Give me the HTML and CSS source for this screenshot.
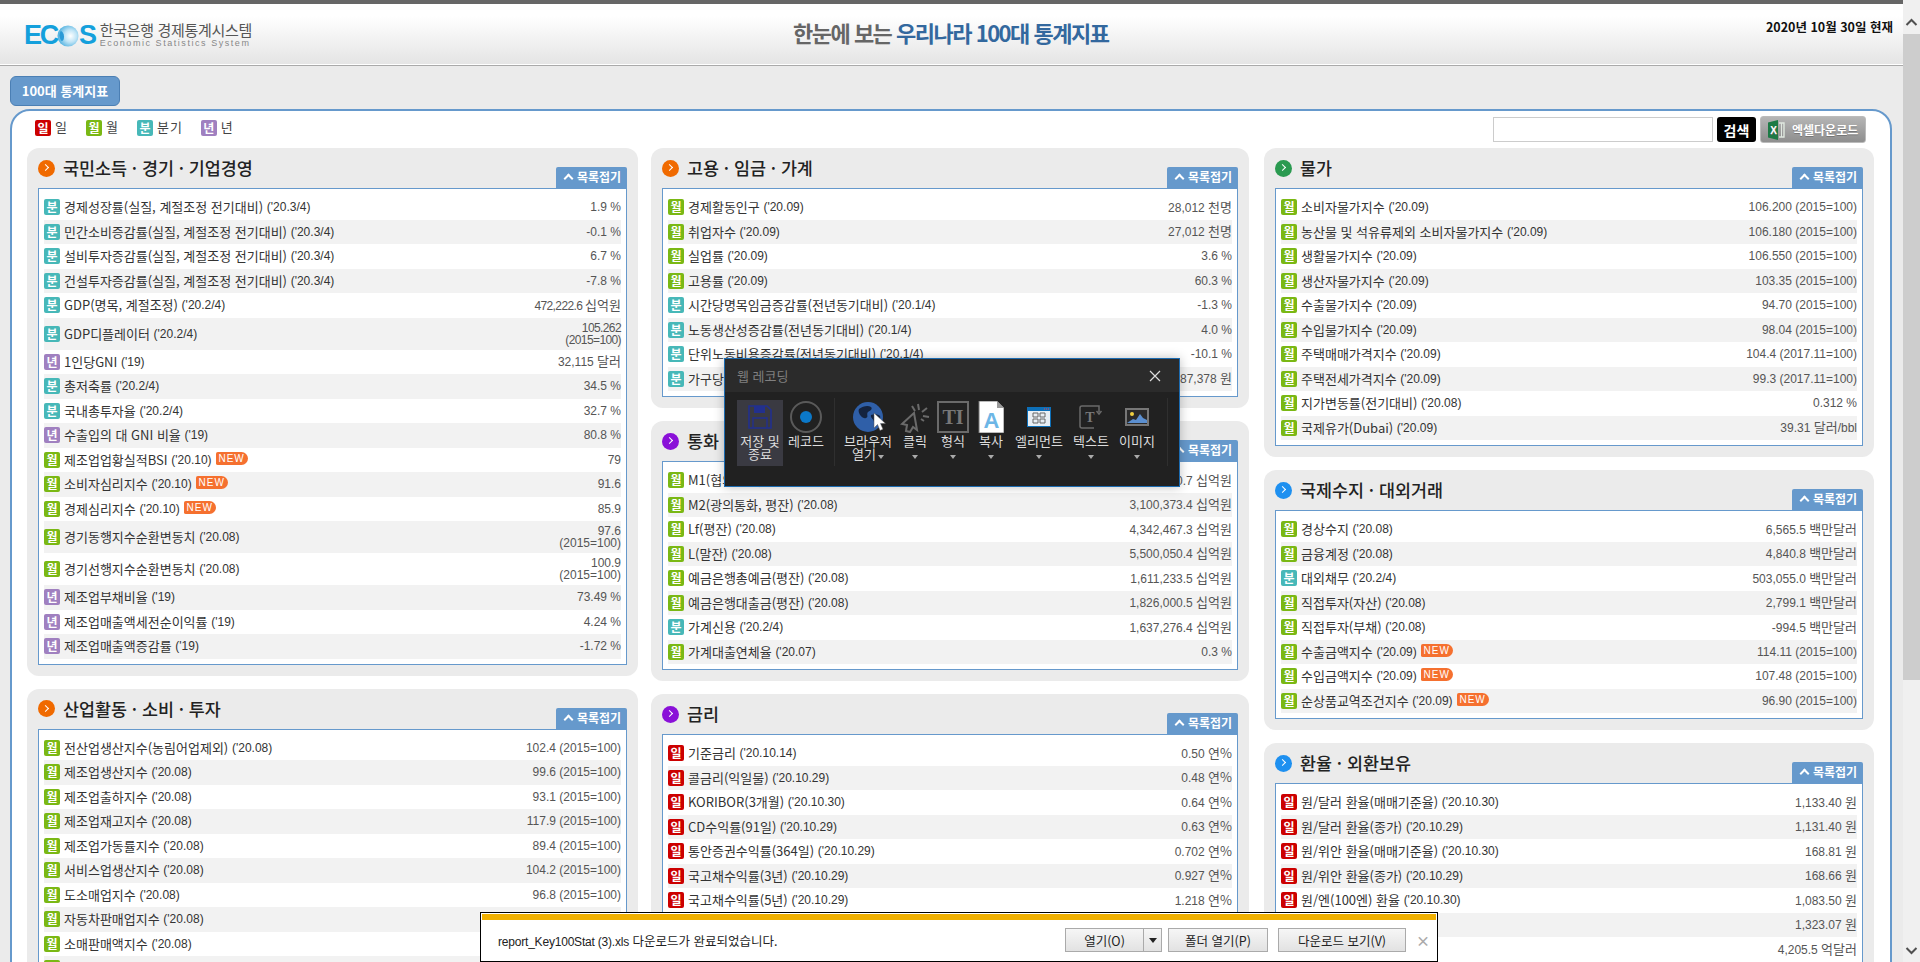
FILE: index.html
```html
<!DOCTYPE html>
<html lang="ko">

<head>
  <meta charset="UTF-8" />
  <title>한눈에 보는 우리나라 100대 통계지표</title>
  <link rel="stylesheet" href="styles.css">
</head>

<body>
  <div class="page">
    <!-- 상단 헤더 -->
    <header class="top">
      <div class="logo">
        <div class="logo-mark">EC<svg class="logo-globe" width="22" height="22" viewBox="0 0 23 23"><defs><radialGradient id="lg" cx="0.62" cy="0.5" r="0.65"><stop offset="0" stop-color="#ffffff"/><stop offset="0.45" stop-color="#bfe4f6"/><stop offset="1" stop-color="#3fa9dc"/></radialGradient></defs><circle cx="11.5" cy="11.5" r="11" fill="url(#lg)"/><path d="M4 6c3 2 4 5 3 9-1 2-2 2-3 1C2 12 2 9 4 6z" fill="#2a9ad6"/></svg>S</div>
        <div class="logo-text">
          <div class="logo-ko">한국은행 경제통계시스템</div>
          <div class="logo-en">Economic Statistics System</div>
        </div>
      </div>
      <h1 class="title">한눈에 보는 <span>우리나라 100대 통계지표</span></h1>
      <div class="today">2020년 10월 30일 현재</div>
    </header>

    <a class="tab">100대 통계지표</a>

    <main class="box">
      <div class="legend-row">
        <div class="legend">
          <span class="legend-item"><i class="bg d">일</i>일</span>
          <span class="legend-item"><i class="bg m">월</i>월</span>
          <span class="legend-item"><i class="bg q">분</i>분기</span>
          <span class="legend-item"><i class="bg y">년</i>년</span>
        </div>
        <div class="search">
          <input class="search-input" />
          <button class="search-btn">검색</button>
          <button class="excel-btn">
            <svg width="17" height="20" viewBox="0 0 17 20"><path d="M0 2.5 10 0v20L0 17.5z" fill="#1d7a45"/><path d="M11 3h5v14h-5" fill="none" stroke="#dfe8df" stroke-width="1.4"/><path d="M13.500 3v14" stroke="#dfe8df"/><text x="2.300" y="13.500" class="excel-x">X</text></svg>
            엑셀다운로드
          </button>
        </div>
      </div>

      <div class="columns">
        <div class="col col1">
          <section class="panel">
            <div class="panel-head">
              <h2 class="panel-title"><i class="dot orange"></i>국민소득 · 경기 · 기업경영</h2>
              <a class="fold">목록접기</a>
            </div>
            <ul class="list">
              <li class="row"><span class="name"><i class="bg q">분</i>경제성장률(실질, 계절조정 전기대비) <em>('20.3/4)</em></span><span class="val">1.9 %</span></li>
              <li class="row"><span class="name"><i class="bg q">분</i>민간소비증감률(실질, 계절조정 전기대비) <em>('20.3/4)</em></span><span class="val">-0.1 %</span></li>
              <li class="row"><span class="name"><i class="bg q">분</i>설비투자증감률(실질, 계절조정 전기대비) <em>('20.3/4)</em></span><span class="val">6.7 %</span></li>
              <li class="row"><span class="name"><i class="bg q">분</i>건설투자증감률(실질, 계절조정 전기대비) <em>('20.3/4)</em></span><span class="val">-7.8 %</span></li>
              <li class="row"><span class="name"><i class="bg q">분</i>GDP(명목, 계절조정) <em>('20.2/4)</em></span><span class="val tight">472,222.6 <u>십억원</u></span></li>
              <li class="row tall"><span class="name"><i class="bg q">분</i>GDP디플레이터 <em>('20.2/4)</em></span><span class="val tight">105.262<br>(2015=100)</span></li>
              <li class="row"><span class="name"><i class="bg y">년</i>1인당GNI <em>('19)</em></span><span class="val">32,115 <u>달러</u></span></li>
              <li class="row"><span class="name"><i class="bg q">분</i>총저축률 <em>('20.2/4)</em></span><span class="val">34.5 %</span></li>
              <li class="row"><span class="name"><i class="bg q">분</i>국내총투자율 <em>('20.2/4)</em></span><span class="val">32.7 %</span></li>
              <li class="row"><span class="name"><i class="bg y">년</i>수출입의 대 GNI 비율 <em>('19)</em></span><span class="val">80.8 %</span></li>
              <li class="row"><span class="name"><i class="bg m">월</i>제조업업황실적BSI <em>('20.10)</em><b class="new">NEW</b></span><span class="val">79</span></li>
              <li class="row"><span class="name"><i class="bg m">월</i>소비자심리지수 <em>('20.10)</em><b class="new">NEW</b></span><span class="val">91.6</span></li>
              <li class="row"><span class="name"><i class="bg m">월</i>경제심리지수 <em>('20.10)</em><b class="new">NEW</b></span><span class="val">85.9</span></li>
              <li class="row tall"><span class="name"><i class="bg m">월</i>경기동행지수순환변동치 <em>('20.08)</em></span><span class="val">97.6<br>(2015=100)</span></li>
              <li class="row tall"><span class="name"><i class="bg m">월</i>경기선행지수순환변동치 <em>('20.08)</em></span><span class="val">100.9<br>(2015=100)</span></li>
              <li class="row"><span class="name"><i class="bg y">년</i>제조업부채비율 <em>('19)</em></span><span class="val">73.49 %</span></li>
              <li class="row"><span class="name"><i class="bg y">년</i>제조업매출액세전순이익률 <em>('19)</em></span><span class="val">4.24 %</span></li>
              <li class="row"><span class="name"><i class="bg y">년</i>제조업매출액증감률 <em>('19)</em></span><span class="val">-1.72 %</span></li>
            </ul>
          </section>

          <section class="panel">
            <div class="panel-head">
              <h2 class="panel-title"><i class="dot orange"></i>산업활동 · 소비 · 투자</h2>
              <a class="fold">목록접기</a>
            </div>
            <ul class="list">
              <li class="row"><span class="name"><i class="bg m">월</i>전산업생산지수(농림어업제외) <em>('20.08)</em></span><span class="val">102.4 (2015=100)</span></li>
              <li class="row"><span class="name"><i class="bg m">월</i>제조업생산지수 <em>('20.08)</em></span><span class="val">99.6 (2015=100)</span></li>
              <li class="row"><span class="name"><i class="bg m">월</i>제조업출하지수 <em>('20.08)</em></span><span class="val">93.1 (2015=100)</span></li>
              <li class="row"><span class="name"><i class="bg m">월</i>제조업재고지수 <em>('20.08)</em></span><span class="val">117.9 (2015=100)</span></li>
              <li class="row"><span class="name"><i class="bg m">월</i>제조업가동률지수 <em>('20.08)</em></span><span class="val">89.4 (2015=100)</span></li>
              <li class="row"><span class="name"><i class="bg m">월</i>서비스업생산지수 <em>('20.08)</em></span><span class="val">104.2 (2015=100)</span></li>
              <li class="row"><span class="name"><i class="bg m">월</i>도소매업지수 <em>('20.08)</em></span><span class="val">96.8 (2015=100)</span></li>
              <li class="row"><span class="name"><i class="bg m">월</i>자동차판매업지수 <em>('20.08)</em></span></li>
              <li class="row"><span class="name"><i class="bg m">월</i>소매판매액지수 <em>('20.08)</em></span></li>
              <li class="row"><span class="name"><i class="bg m">월</i></span></li>
            </ul>
          </section>
        </div>

        <div class="col col2">
          <section class="panel">
            <div class="panel-head">
              <h2 class="panel-title"><i class="dot orange"></i>고용 · 임금 · 가계</h2>
              <a class="fold">목록접기</a>
            </div>
            <ul class="list">
              <li class="row"><span class="name"><i class="bg m">월</i>경제활동인구 <em>('20.09)</em></span><span class="val">28,012 <u>천명</u></span></li>
              <li class="row"><span class="name"><i class="bg m">월</i>취업자수 <em>('20.09)</em></span><span class="val">27,012 <u>천명</u></span></li>
              <li class="row"><span class="name"><i class="bg m">월</i>실업률 <em>('20.09)</em></span><span class="val">3.6 %</span></li>
              <li class="row"><span class="name"><i class="bg m">월</i>고용률 <em>('20.09)</em></span><span class="val">60.3 %</span></li>
              <li class="row"><span class="name"><i class="bg q">분</i>시간당명목임금증감률(전년동기대비) <em>('20.1/4)</em></span><span class="val">-1.3 %</span></li>
              <li class="row"><span class="name"><i class="bg q">분</i>노동생산성증감률(전년동기대비) <em>('20.1/4)</em></span><span class="val">4.0 %</span></li>
              <li class="row"><span class="name"><i class="bg q">분</i>단위노동비용증감률(전년동기대비) <em>('20.1/4)</em></span><span class="val">-10.1 %</span></li>
              <li class="row"><span class="name"><i class="bg q">분</i>가구당월평균소득 <em>('20.2/4)</em></span><span class="val">5,387,378 <u>원</u></span></li>
            </ul>
          </section>

          <section class="panel">
            <div class="panel-head">
              <h2 class="panel-title"><i class="dot purple"></i>통화 · 유동성</h2>
              <a class="fold">목록접기</a>
            </div>
            <ul class="list">
              <li class="row"><span class="name"><i class="bg m">월</i>M1(협의통화, 평잔) <em>('20.08)</em></span><span class="val">1,098,000.7 <u>십억원</u></span></li>
              <li class="row"><span class="name"><i class="bg m">월</i>M2(광의통화, 평잔) <em>('20.08)</em></span><span class="val">3,100,373.4 <u>십억원</u></span></li>
              <li class="row"><span class="name"><i class="bg m">월</i>Lf(평잔) <em>('20.08)</em></span><span class="val">4,342,467.3 <u>십억원</u></span></li>
              <li class="row"><span class="name"><i class="bg m">월</i>L(말잔) <em>('20.08)</em></span><span class="val">5,500,050.4 <u>십억원</u></span></li>
              <li class="row"><span class="name"><i class="bg m">월</i>예금은행총예금(평잔) <em>('20.08)</em></span><span class="val">1,611,233.5 <u>십억원</u></span></li>
              <li class="row"><span class="name"><i class="bg m">월</i>예금은행대출금(평잔) <em>('20.08)</em></span><span class="val">1,826,000.5 <u>십억원</u></span></li>
              <li class="row"><span class="name"><i class="bg q">분</i>가계신용 <em>('20.2/4)</em></span><span class="val">1,637,276.4 <u>십억원</u></span></li>
              <li class="row"><span class="name"><i class="bg m">월</i>가계대출연체율 <em>('20.07)</em></span><span class="val">0.3 %</span></li>
            </ul>
          </section>

          <section class="panel">
            <div class="panel-head">
              <h2 class="panel-title"><i class="dot purple"></i>금리</h2>
              <a class="fold">목록접기</a>
            </div>
            <ul class="list">
              <li class="row"><span class="name"><i class="bg d">일</i>기준금리 <em>('20.10.14)</em></span><span class="val">0.50 <u>연%</u></span></li>
              <li class="row"><span class="name"><i class="bg d">일</i>콜금리(익일물) <em>('20.10.29)</em></span><span class="val">0.48 <u>연%</u></span></li>
              <li class="row"><span class="name"><i class="bg d">일</i>KORIBOR(3개월) <em>('20.10.30)</em></span><span class="val">0.64 <u>연%</u></span></li>
              <li class="row"><span class="name"><i class="bg d">일</i>CD수익률(91일) <em>('20.10.29)</em></span><span class="val">0.63 <u>연%</u></span></li>
              <li class="row"><span class="name"><i class="bg d">일</i>통안증권수익률(364일) <em>('20.10.29)</em></span><span class="val">0.702 <u>연%</u></span></li>
              <li class="row"><span class="name"><i class="bg d">일</i>국고채수익률(3년) <em>('20.10.29)</em></span><span class="val">0.927 <u>연%</u></span></li>
              <li class="row"><span class="name"><i class="bg d">일</i>국고채수익률(5년) <em>('20.10.29)</em></span><span class="val">1.218 <u>연%</u></span></li>
            </ul>
          </section>
        </div>

        <div class="col col3">
          <section class="panel">
            <div class="panel-head">
              <h2 class="panel-title"><i class="dot green"></i>물가</h2>
              <a class="fold">목록접기</a>
            </div>
            <ul class="list">
              <li class="row"><span class="name"><i class="bg m">월</i>소비자물가지수 <em>('20.09)</em></span><span class="val">106.200 (2015=100)</span></li>
              <li class="row"><span class="name"><i class="bg m">월</i>농산물 및 석유류제외 소비자물가지수 <em>('20.09)</em></span><span class="val">106.180 (2015=100)</span></li>
              <li class="row"><span class="name"><i class="bg m">월</i>생활물가지수 <em>('20.09)</em></span><span class="val">106.550 (2015=100)</span></li>
              <li class="row"><span class="name"><i class="bg m">월</i>생산자물가지수 <em>('20.09)</em></span><span class="val">103.35 (2015=100)</span></li>
              <li class="row"><span class="name"><i class="bg m">월</i>수출물가지수 <em>('20.09)</em></span><span class="val">94.70 (2015=100)</span></li>
              <li class="row"><span class="name"><i class="bg m">월</i>수입물가지수 <em>('20.09)</em></span><span class="val">98.04 (2015=100)</span></li>
              <li class="row"><span class="name"><i class="bg m">월</i>주택매매가격지수 <em>('20.09)</em></span><span class="val">104.4 (2017.11=100)</span></li>
              <li class="row"><span class="name"><i class="bg m">월</i>주택전세가격지수 <em>('20.09)</em></span><span class="val">99.3 (2017.11=100)</span></li>
              <li class="row"><span class="name"><i class="bg m">월</i>지가변동률(전기대비) <em>('20.08)</em></span><span class="val">0.312 %</span></li>
              <li class="row"><span class="name"><i class="bg m">월</i>국제유가(Dubai) <em>('20.09)</em></span><span class="val">39.31 <u>달러</u>/bbl</span></li>
            </ul>
          </section>

          <section class="panel">
            <div class="panel-head">
              <h2 class="panel-title"><i class="dot blue"></i>국제수지 · 대외거래</h2>
              <a class="fold">목록접기</a>
            </div>
            <ul class="list">
              <li class="row"><span class="name"><i class="bg m">월</i>경상수지 <em>('20.08)</em></span><span class="val">6,565.5 <u>백만달러</u></span></li>
              <li class="row"><span class="name"><i class="bg m">월</i>금융계정 <em>('20.08)</em></span><span class="val">4,840.8 <u>백만달러</u></span></li>
              <li class="row"><span class="name"><i class="bg q">분</i>대외채무 <em>('20.2/4)</em></span><span class="val">503,055.0 <u>백만달러</u></span></li>
              <li class="row"><span class="name"><i class="bg m">월</i>직접투자(자산) <em>('20.08)</em></span><span class="val">2,799.1 <u>백만달러</u></span></li>
              <li class="row"><span class="name"><i class="bg m">월</i>직접투자(부채) <em>('20.08)</em></span><span class="val">-994.5 <u>백만달러</u></span></li>
              <li class="row"><span class="name"><i class="bg m">월</i>수출금액지수 <em>('20.09)</em><b class="new">NEW</b></span><span class="val">114.11 (2015=100)</span></li>
              <li class="row"><span class="name"><i class="bg m">월</i>수입금액지수 <em>('20.09)</em><b class="new">NEW</b></span><span class="val">107.48 (2015=100)</span></li>
              <li class="row"><span class="name"><i class="bg m">월</i>순상품교역조건지수 <em>('20.09)</em><b class="new">NEW</b></span><span class="val">96.90 (2015=100)</span></li>
            </ul>
          </section>

          <section class="panel">
            <div class="panel-head">
              <h2 class="panel-title"><i class="dot blue"></i>환율 · 외환보유</h2>
              <a class="fold">목록접기</a>
            </div>
            <ul class="list">
              <li class="row"><span class="name"><i class="bg d">일</i>원/달러 환율(매매기준율) <em>('20.10.30)</em></span><span class="val">1,133.40 <u>원</u></span></li>
              <li class="row"><span class="name"><i class="bg d">일</i>원/달러 환율(종가) <em>('20.10.29)</em></span><span class="val">1,131.40 <u>원</u></span></li>
              <li class="row"><span class="name"><i class="bg d">일</i>원/위안 환율(매매기준율) <em>('20.10.30)</em></span><span class="val">168.81 <u>원</u></span></li>
              <li class="row"><span class="name"><i class="bg d">일</i>원/위안 환율(종가) <em>('20.10.29)</em></span><span class="val">168.66 <u>원</u></span></li>
              <li class="row"><span class="name"><i class="bg d">일</i>원/엔(100엔) 환율 <em>('20.10.30)</em></span><span class="val">1,083.50 <u>원</u></span></li>
              <li class="row"><span class="name"><i class="bg d">일</i>원/유로 환율 <em>('20.10.30)</em></span><span class="val">1,323.07 <u>원</u></span></li>
              <li class="row"><span class="name"><i class="bg m">월</i>외환보유액 <em>('20.09)</em></span><span class="val">4,205.5 <u>억달러</u></span></li>
            </ul>
          </section>
        </div>
      </div>
    </main>
  </div>

  <!-- 브라우저 스크롤바 -->
  <div class="scrollbar">
    <div class="sb-end"><svg width="17" height="34" viewBox="0 0 17 34"><path d="M3.500 25 8.500 20 13.500 25" fill="none" stroke="#505050" stroke-width="2"/></svg></div>
    <div class="sb-thumb"></div>
    <div class="sb-track"><svg width="17" height="20" viewBox="0 0 17 20"><path d="M3.500 6 8.500 11 13.500 6" fill="none" stroke="#505050" stroke-width="2"/></svg></div>
  </div>

  <!-- 웹 레코딩 창 -->
  <div class="rec">
    <div class="rec-head"><span>웹 레코딩</span>
      <svg width="12" height="12" viewBox="0 0 12 12"><path d="M1 1 11 11M11 1 1 11" stroke="#ddd" stroke-width="1.200"/></svg>
    </div>
    <div class="rec-body">
      <div class="tool w46 on">
        <div class="tool-ico"><svg width="24" height="24" viewBox="0 0 24 24"><path d="M1 1h18l4 4v18H1z" fill="none" stroke="#22308e" stroke-width="1.600"/><path d="M6 1v7h11V1" fill="#22308e"/><path d="M5 23V13h14v10" fill="none" stroke="#22308e" stroke-width="1.400"/></svg></div>
        <div class="tool-label">저장 및<br>종료</div>
      </div>
      <div class="tool w46">
        <div class="tool-ico"><svg width="32" height="32" viewBox="0 0 32 32"><circle cx="16" cy="16" r="15" fill="none" stroke="#5a5a5a" stroke-width="2"/><circle cx="16" cy="16" r="6" fill="#0b78c8"/></svg></div>
        <div class="tool-label">레코드</div>
      </div>
      <div class="rec-sep"></div>
      <div class="tool w56">
        <div class="tool-ico"><svg width="42" height="32" viewBox="-6 0 42 32"><circle cx="15" cy="16" r="15" fill="#2f5fa8"/><path d="M6 8c4-3 9-4 12-2 2 2-1 4-3 5-2 2 1 5-2 6-3 1-5-2-6-3-1-2-2-4-1-6zM18 14c3-1 7-1 9 1 1 3-1 7-3 9-2 1-3-1-3-3 0-3-4-4-3-7z" fill="#14233f"/><path d="M21 12v15l3.500-3.500 2.500 6 3-1.300-2.500-5.700h5z" fill="#fff" stroke="#555" stroke-width="0.500"/></svg></div>
        <div class="tool-label">브라우저<br>열기<i class="dd inline"></i></div>
      </div>
      <div class="tool w38">
        <div class="tool-ico"><svg width="30" height="32" viewBox="0 0 30 32"><path d="M14 12 2 23l5 1-1 6 4 1 3-5 4 3z" fill="none" stroke="#6a6a6a" stroke-width="2"/><path d="M18 3l1 6M27 7l-5 4M29 16l-6-1M12 5l3 5M24 20l-3-2" stroke="#6a6a6a" stroke-width="2"/></svg></div>
        <div class="tool-label">클릭<br><i class="dd"></i></div>
      </div>
      <div class="tool w38">
        <div class="tool-ico"><svg width="32" height="32" viewBox="0 0 32 32"><rect x="1" y="1" width="30" height="30" fill="none" stroke="#6a6a6a" stroke-width="2"/><text x="16" y="23" class="ti">TI</text></svg></div>
        <div class="tool-label">형식<br><i class="dd"></i></div>
      </div>
      <div class="tool w38">
        <div class="tool-ico"><svg width="26" height="32" viewBox="0 0 26 32"><path d="M1 0h18l7 7v25H1z" fill="#fff" stroke="#777"/><path d="M19 0v7h7z" fill="#999"/><text x="13.500" y="27" class="ta">A</text></svg></div>
        <div class="tool-label">복사<br><i class="dd"></i></div>
      </div>
      <div class="tool w58">
        <div class="tool-ico"><svg width="24" height="20" viewBox="0 0 24 20"><rect width="24" height="20" fill="#0d6fb8"/><rect x="1" y="4" width="22" height="15" fill="#e8eef4"/><path d="M6 6h5v4H6zM13 6h5v4h-5zM6 12h5v4H6zM13 12h5v4h-5z" fill="none" stroke="#666"/><path d="M17 2h1M19 2h1M21 2h1" stroke="#e44"/></svg></div>
        <div class="tool-label">엘리먼트<br><i class="dd"></i></div>
      </div>
      <div class="tool w46">
        <div class="tool-ico"><svg width="24" height="24" viewBox="0 0 24 24"><path d="M15 1H3a2 2 0 0 0-2 2v18a2 2 0 0 0 2 2h12" fill="none" stroke="#6a6a6a" stroke-width="1.500"/><path d="M15 1h5v6M17.500 6l2.500 3 2.500-3" fill="none" stroke="#6a6a6a" stroke-width="1.500"/><text x="11" y="17" class="tt">T</text></svg></div>
        <div class="tool-label">텍스트<br><i class="dd"></i></div>
      </div>
      <div class="tool w46">
        <div class="tool-ico"><svg width="24" height="18" viewBox="0 0 24 18"><rect x="1" y="1" width="22" height="16" fill="#2a2a2a" stroke="#777" stroke-width="2"/><circle cx="7" cy="6" r="2" fill="#f0d040"/><path d="M2 15l6-4 3 1 4-6 3 4 4 2v3z" fill="#5b8fd0"/></svg></div>
        <div class="tool-label">이미지<br><i class="dd"></i></div>
      </div>
      <div class="rec-sep end"></div>
    </div>
  </div>

  <!-- 다운로드 알림 -->
  <div class="dl">
    <div class="dl-strip"></div>
    <div class="dl-body">
      <span class="dl-msg"><em>report_Key100Stat (3).xls</em> 다운로드가 완료되었습니다.</span>
      <button class="dl-btn open">열기(O)</button><button class="dl-btn more"></button>
      <button class="dl-btn folder">폴더 열기(P)</button>
      <button class="dl-btn view">다운로드 보기(V)</button>
      <span class="dl-x">×</span>
    </div>
  </div>
</body>

</html>
```

FILE: styles.css
```css
body {
  margin: 0;
  height: 962px;
  overflow: hidden;
  display: flex;
  background: #ebebeb;
  font-family: "Noto Sans CJK KR", sans-serif;
  font-size: 13px;
  color: #222;
}

.page {
  width: 1903px;
  height: 962px;
  overflow: hidden;
  border-top: 4px solid #666;
  box-sizing: border-box;
}

/* header */
.top {
  height: 61px;
  background: linear-gradient(#fff 20%, #e4e4e4);
  border-bottom: 1px solid #aaa;
  box-shadow: inset 0 -1px 0 #fff;
  display: flex;
}

.logo {
  width: 245px;
  flex: none;
  display: flex;
  margin: 18px 0 0 24px;
}

.logo-mark {
  display: flex;
  align-items: flex-start;
  font-family: "Liberation Sans", sans-serif;
  font-weight: bold;
  font-size: 27px;
  line-height: 27px;
  letter-spacing: -2.300px;
  color: #14a0dc;
}

.logo-globe {
  margin-top: 3px;
}

.logo-text {
  margin-left: 5px;
}

.logo-ko {
  margin-top: -1px;
  font-size: 15px;
  line-height: 18px;
  letter-spacing: -0.300px;
  color: #555;
  white-space: nowrap;
}

.logo-en {
  font-family: "Liberation Sans", sans-serif;
  font-size: 9px;
  line-height: 9px;
  letter-spacing: 1.550px;
  color: #888;
  white-space: nowrap;
}

.title {
  margin: 13px 0 0 524px;
  font-size: 22px;
  line-height: 30px;
  font-weight: bold;
  letter-spacing: -1.500px;
  color: #666;
  white-space: nowrap;
}

.title span {
  color: #33689e;
}

.today {
  margin: 14px 10px 0 auto;
  font-size: 12.500px;
  line-height: 18px;
  font-weight: bold;
  color: #111;
}

/* tab */
.tab {
  display: block;
  width: 110px;
  height: 30px;
  box-sizing: border-box;
  margin: 10px 0 0 10px;
  background: #6699cc;
  border: 1px solid #4b7fb4;
  border-radius: 6px;
  color: #fff;
  font-size: 13px;
  font-weight: bold;
  line-height: 28px;
  text-align: center;
}

/* main box */
.box {
  width: 1882px;
  height: 900px;
  box-sizing: border-box;
  margin: 3px 0 0 10px;
  background: #fff;
  border: 2px solid #6699cc;
  border-radius: 20px 20px 0 0;
  padding: 0 16px 0 15px;
}

.legend-row {
  height: 37px;
  display: flex;
  justify-content: space-between;
}

.legend {
  display: flex;
  gap: 18px;
  margin: 9px 0 0 8px;
}

.legend-item {
  display: flex;
  gap: 4px;
  line-height: 14px;
  letter-spacing: 1px;
  color: #444;
}

.bg {
  flex: none;
  display: inline-block;
  width: 16px;
  height: 16px;
  border-radius: 2px;
  color: #fff;
  font-style: normal;
  font-weight: bold;
  font-size: 12px;
  line-height: 15px;
  letter-spacing: 0;
  text-align: center;
}

.bg.d { background: #cc0000; }
.bg.m { background: #7ab814; }
.bg.q { background: #47b8b8; }
.bg.y { background: #a080c0; }

.search {
  display: flex;
  align-items: flex-start;
  gap: 4px;
  margin: 5px 8px 0 0;
}

.search-input {
  width: 220px;
  height: 25px;
  margin: 1px 0 0;
  padding: 0;
  box-sizing: border-box;
  border: 1px solid #ccc;
}

.search-btn {
  width: 39px;
  height: 25px;
  margin-top: 1px;
  padding: 0;
  border: none;
  border-radius: 3px;
  background: #000;
  color: #fff;
  font-family: inherit;
  font-size: 14px;
  font-weight: bold;
}

.excel-btn {
  width: 106px;
  height: 27px;
  padding: 0 0 0 7px;
  display: flex;
  align-items: center;
  gap: 7px;
  border: 1px solid #bbb;
  border-radius: 3px;
  background: linear-gradient(#b5b5b5, #8e8e8e);
  color: #fff;
  font-family: inherit;
  font-size: 12px;
  font-weight: bold;
  white-space: nowrap;
  text-shadow: 0 1px 0 #777;
}

.excel-x {
  font: bold 10px "Liberation Sans", sans-serif;
  fill: #fff;
}

/* columns */
.columns {
  display: flex;
  align-items: flex-start;
  gap: 13px;
}

.col1 { width: 611px; flex: none; }
.col2 { width: 598px; flex: none; margin-right: 2px; }
.col3 { width: 610px; flex: none; }

.panel {
  background: #ebebeb;
  border-radius: 12px;
  padding: 0 11px 11px;
  margin-bottom: 13px;
}

.panel-head {
  height: 40px;
  display: flex;
  justify-content: space-between;
  align-items: flex-end;
}

.panel-title {
  align-self: flex-start;
  display: flex;
  align-items: center;
  gap: 8px;
  margin: 8px 0 0;
  font-size: 17.400px;
  line-height: 24px;
  font-weight: 500;
  color: #222;
}

.dot {
  width: 17px;
  height: 17px;
  border-radius: 50%;
  margin-top: 0;
  position: relative;
}

.dot::after {
  content: "";
  position: absolute;
  left: 4.500px;
  top: 5.500px;
  width: 4px;
  height: 4px;
  border-top: 1.500px solid #fff;
  border-right: 1.500px solid #fff;
  transform: rotate(45deg);
}

.dot.orange { background: #f06a00; }
.dot.purple { background: #8a10d8; }
.dot.green { background: #2a9a50; }
.dot.blue { background: #1e90f0; }

.fold {
  width: 71px;
  height: 21px;
  box-sizing: border-box;
  background: #6699cc;
  border-radius: 2px 2px 0 0;
  color: #fff;
  font-size: 12px;
  font-weight: bold;
  line-height: 20px;
  padding-left: 21px;
  position: relative;
}

.fold::before {
  content: "";
  position: absolute;
  left: 9px;
  top: 8px;
  width: 5px;
  height: 5px;
  border-top: 2px solid #fff;
  border-left: 2px solid #fff;
  transform: rotate(45deg);
}

.list {
  list-style: none;
  margin: 0;
  padding: 6px 5px 5px;
  background: #fff;
  border: 1px solid #6699cc;
}

.row {
  height: 24.500px;
  display: flex;
  justify-content: space-between;
  align-items: center;
}

.row:nth-child(even) {
  background: #f2f2f2;
}

.row.tall {
  height: 32px;
}

.name {
  display: flex;
  align-items: center;
  white-space: pre;
  line-height: 16px;
  color: #333;
}

.name .bg {
  margin-right: 4px;
}

.name em {
  font-family: "Liberation Sans", sans-serif;
  font-size: 12px;
  font-style: normal;
  color: #333;
}

.new {
  width: 32px;
  height: 13px;
  margin: -3px 0 0 4px;
  border-radius: 2px 7px 7px 2px;
  background: #f5702f;
  color: #fff;
  font: normal 10px/13px "Liberation Sans", sans-serif;
  letter-spacing: 1px;
  text-align: center;
}

.val {
  font-family: "Liberation Sans", "Noto Sans CJK KR", sans-serif;
  font-size: 12px;
  line-height: 12px;
  text-align: right;
  color: #555;
  white-space: nowrap;
}

.val.tight {
  letter-spacing: -0.600px;
}

.val.tight u {
  letter-spacing: 0;
}

.val u {
  font-family: "Noto Sans CJK KR", sans-serif;
  font-size: 13px;
  text-decoration: none;
}

/* scrollbar */
.scrollbar {
  width: 17px;
  height: 962px;
  flex: none;
  display: flex;
  flex-direction: column;
  background: #f0f0f0;
}

.sb-end {
  height: 34px;
}

.sb-thumb {
  height: 646px;
  background: #cdcdcd;
}

.sb-track {
  flex: 1;
  display: flex;
  align-items: flex-end;
}

/* recording window */
.rec {
  position: absolute;
  left: 724px;
  top: 358px;
  width: 456px;
  height: 129px;
  box-sizing: border-box;
  background: #212121;
  border: 1px solid #1c6bb0;
  box-shadow: 0 0 10px rgba(0, 0, 0, 0.25);
}

.rec-head {
  height: 33px;
  padding: 0 18px 0 12px;
  background: #2b2b2b;
  color: #808080;
  display: flex;
  justify-content: space-between;
  align-items: center;
}

.rec-body {
  display: flex;
  align-items: flex-start;
  padding: 8px 0 0 12px;
}

.tool {
  height: 66px;
  flex: none;
  text-align: center;
}

.tool.on { background: #3a3a42; }
.w38 { width: 38px; }
.w46 { width: 46px; }
.w56 { width: 56px; }
.w58 { width: 58px; }

.tool-ico {
  height: 34px;
  display: flex;
  justify-content: center;
  align-items: center;
}

.tool-label {
  color: #ddd;
  font-size: 13px;
  line-height: 13px;
  white-space: nowrap;
}

.dd {
  display: inline-block;
  vertical-align: middle;
  margin-top: 3px;
  border: 3.500px solid transparent;
  border-top: 4px solid #aaa;
  border-bottom: none;
}

.dd.inline {
  margin-left: 2px;
}

.rec-sep {
  width: 1px;
  height: 68px;
  margin: -2px 5px 0;
  background: #2f2f2f;
}

.rec-sep.end {
  margin-left: 7px;
}

.ti {
  font: bold 20px "Liberation Serif", serif;
  fill: #777;
  text-anchor: middle;
}

.ta {
  font: bold 22px "Liberation Sans", sans-serif;
  fill: #6db6e6;
  text-anchor: middle;
}

.tt {
  font: bold 14px "Liberation Serif", serif;
  fill: #777;
  text-anchor: middle;
}

/* download bar */
.dl {
  position: absolute;
  left: 480px;
  top: 912px;
  width: 958px;
  height: 50px;
  box-sizing: border-box;
  background: #fff;
  border: 1px solid #000;
  padding: 1px;
}

.dl-strip {
  height: 6px;
  background: #f0b000;
}

.dl-body {
  display: flex;
  align-items: center;
  height: 40px;
  padding-left: 16px;
}

.dl-msg {
  flex: 1;
  font-size: 12.500px;
  color: #222;
  white-space: nowrap;
}

.dl-msg em {
  font: normal 12px "Liberation Sans", sans-serif;
  letter-spacing: -0.200px;
}

.dl-btn {
  height: 24px;
  padding: 0;
  box-sizing: border-box;
  border: 1px solid #aaa;
  background: linear-gradient(#f6f6f6, #e2e2e2);
  font-family: inherit;
  font-size: 12.500px;
  color: #222;
}

.dl-btn.open { width: 79px; }
.dl-btn.more { width: 18px; border-left: none; position: relative; }
.dl-btn.folder { width: 100px; margin-left: 6px; }
.dl-btn.view { width: 128px; margin-left: 10px; }

.dl-btn.more::after {
  content: "";
  position: absolute;
  left: 5px;
  top: 9px;
  border: 4px solid transparent;
  border-top: 5px solid #222;
  border-bottom: none;
}

.dl-x {
  width: 30px;
  box-sizing: border-box;
  padding-right: 6px;
  text-align: right;
  font-size: 14px;
  font-weight: bold;
  color: #aaa;
}
```
